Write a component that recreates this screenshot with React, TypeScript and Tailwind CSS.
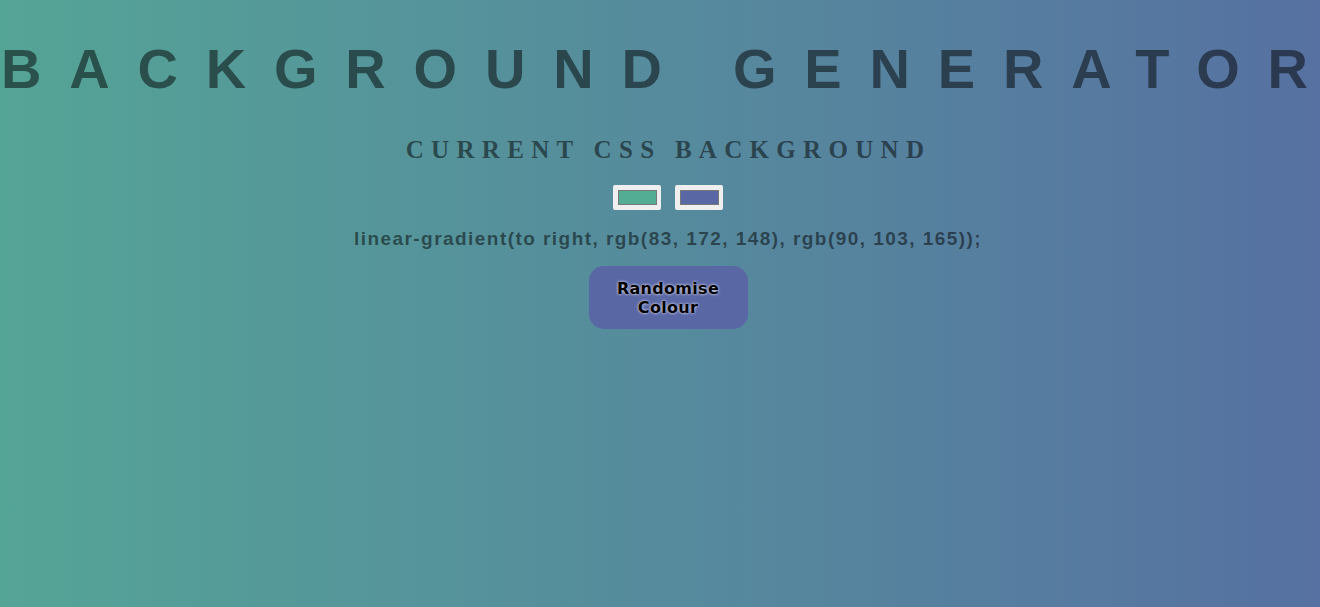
export default function App() {
  return (
    <div className="min-h-[607px] w-full overflow-hidden bg-gradient-to-r from-[#54a496] to-[#5671a1]">
      {/* Title */}
      <h1 className="mt-[41px] ml-[1px] whitespace-nowrap font-['Liberation_Sans',Arial,sans-serif] text-[56px] font-bold leading-none tracking-[27.8px] text-black/50">
        BACKGROUND GENERATO<span className="tracking-normal">R</span>
      </h1>

      <div className="flex flex-col items-center pl-[16px]">
        <h3 className="mt-[40px] pl-[1px] font-['Liberation_Serif','Times_New_Roman',serif] text-[25px] font-bold leading-none tracking-[7.3px] text-black/50">
          CURRENT CSS BACKGROUND
        </h3>

        {/* Colour inputs */}
        <div className="mt-[23px] flex gap-[14px]">
          <div className="flex h-[25px] w-[48px] items-center justify-center rounded-[2px] bg-[#efefef]">
            <div className="h-[15px] w-[39px] border border-[#777] bg-[rgb(83,172,148)]" />
          </div>
          <div className="flex h-[25px] w-[48px] items-center justify-center rounded-[2px] bg-[#efefef]">
            <div className="h-[15px] w-[39px] border border-[#777] bg-[rgb(90,103,165)]" />
          </div>
        </div>

        <p className="mt-[19px] font-['Liberation_Sans',Arial,sans-serif] text-[19px] font-bold leading-none tracking-[1.45px] text-black/50">
          linear-gradient(to right, rgb(83, 172, 148), rgb(90, 103, 165));
        </p>

        <button className="mt-[18px] flex h-[63px] w-[159px] items-center justify-center rounded-[15px] bg-[rgb(90,103,165)] font-['DejaVu_Sans',Verdana,sans-serif] text-[16px] font-bold leading-[19px] tracking-[0.3px] text-black [text-shadow:0_0_3px_#fff]">
          Randomise
          <br />
          Colour
        </button>
      </div>
    </div>
  );
}
